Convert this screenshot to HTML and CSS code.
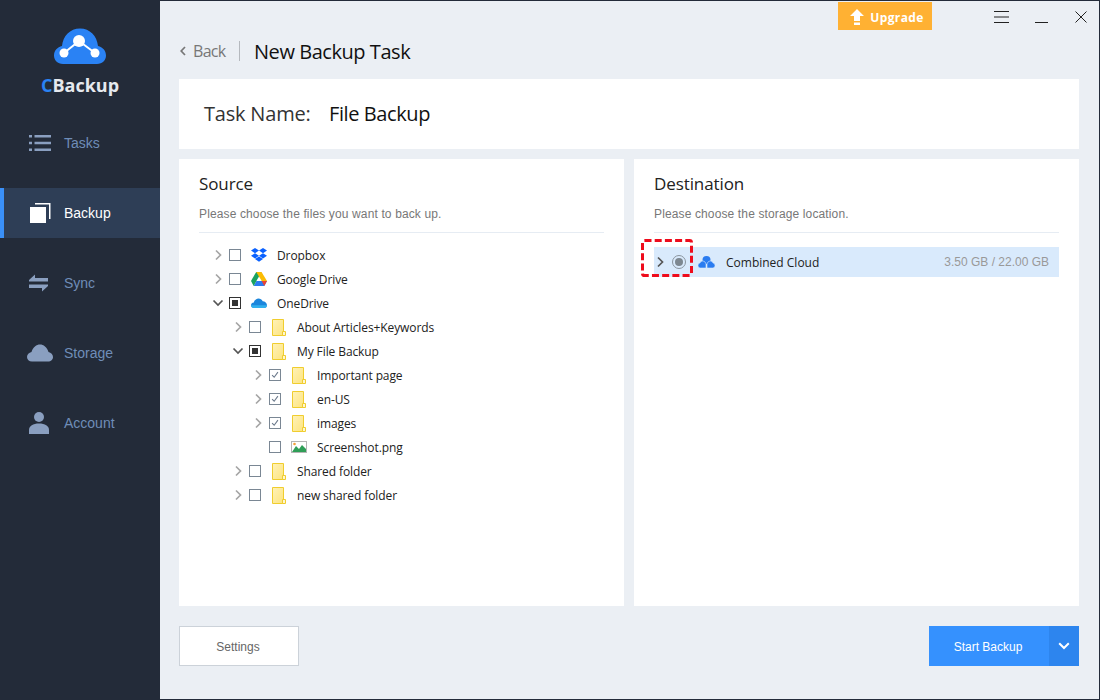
FILE: index.html
```html
<!DOCTYPE html>
<html lang="en">
<head>
<meta charset="utf-8">
<title>CBackup</title>
<link rel="stylesheet" href="styles.css">
</head>
<body>
<svg class="defs" width="0" height="0" aria-hidden="true">
  <defs>
    <linearGradient id="fgrad" x1="0" y1="0" x2="1" y2="1"><stop offset="0" stop-color="#fff2b8"/><stop offset="1" stop-color="#fde47e"/></linearGradient>
  </defs>
  <symbol id="chev-r" viewBox="0 0 10 12"><path d="M3 1.5 7.5 6 3 10.500" fill="none" stroke="currentColor" stroke-width="1.7"/></symbol>
  <symbol id="chev-d" viewBox="0 0 12 10"><path d="M1.500 2.500 6 7l4.500-4.500" fill="none" stroke="currentColor" stroke-width="1.700"/></symbol>
  <symbol id="folder" viewBox="0 0 14 17">
    <path d="M.5.5h11v16H.5z" fill="url(#fgrad)" stroke="#f0cd2e"/>
    <path d="M10.500 16.500v-4h3v4z" fill="#fff6cf" stroke="#f0cd2e"/>
  </symbol>
  <symbol id="tick" viewBox="0 0 12 12"><path d="M2.500 6.200 5 8.700 9.500 2.500" fill="none" stroke="#6c7a8c" stroke-width="1.300"/></symbol>
</svg>
<div class="app">
  <aside class="sidebar">
    <div class="logo">
      <svg class="logo-mark" width="54" height="37" viewBox="0 0 54 37">
        <path d="M10 36C4.500 36 1 32 1 27.500 1 22.500 4.500 19 9 18 10 8 17 .5 27 .5S44 8 45 18c4.500 1 8 4.500 8 9.500C53 32 49.500 36 44 36z" fill="#2a82f4"/>
        <path d="M11 25 26 13 42 25" fill="none" stroke="#fff" stroke-width="2"/>
        <circle cx="26" cy="13" r="6" fill="#fff"/><circle cx="11" cy="25" r="4.500" fill="#fff"/><circle cx="42" cy="25" r="4.500" fill="#fff"/>
      </svg>
      <div class="logo-text"><span class="logo-c">C</span>Backup</div>
    </div>
    <nav class="nav">
      <a class="nav-item">
        <svg class="nav-icon" width="22" height="18" viewBox="0 0 22 18"><path d="M0 1h3v2.500H0zM0 7.800h3v2.500H0zM0 14.500h3V17H0zM5.500 1H22v2.500H5.500zM5.500 7.800H22v2.500H5.500zM5.500 14.500H22V17H5.500z" fill="#8a9fc0"/></svg>
        <span>Tasks</span>
      </a>
      <a class="nav-item active">
        <svg class="nav-icon" width="22" height="20" viewBox="0 0 22 20"><path d="M5 0h15.500v16H19V1.500H5z" fill="#fff"/><rect x="0" y="4" width="16" height="16" fill="#fff"/></svg>
        <span>Backup</span>
      </a>
      <a class="nav-item">
        <svg class="nav-icon" width="19" height="18" viewBox="0 0 19 18"><path d="M0 7.500V6L6 .5V4h13v3.500zM19 10.500V12l-6 5.500V14H0v-3.500z" fill="#8a9fc0"/></svg>
        <span>Sync</span>
      </a>
      <a class="nav-item">
        <svg class="nav-icon" width="26" height="18" viewBox="0 0 26 18"><path d="M5 17.500C2 17.500 0 15.500 0 13c0-2.500 2-4.500 4.500-5C6 3 9.500.5 13 .5s7 2.500 8.500 7.500c2.500.5 4.500 2.500 4.500 5 0 2.500-2 4.500-5 4.500z" fill="#8a9fc0"/></svg>
        <span>Storage</span>
      </a>
      <a class="nav-item">
        <svg class="nav-icon" width="20" height="22" viewBox="0 0 20 22"><circle cx="10" cy="5" r="5" fill="#8a9fc0"/><path d="M0 22v-4c0-4 4-6.500 10-6.500S20 14 20 18v4z" fill="#8a9fc0"/></svg>
        <span>Account</span>
      </a>
    </nav>
  </aside>

  <main class="main">
    <div class="titlebar">
      <a class="upgrade">
        <svg width="14" height="16" viewBox="0 0 14 16"><path d="M7 0l7 7H10v5H4V7H0zM4 13.500h6V16H4z" fill="#fff"/></svg>
        <span>Upgrade</span>
      </a>
      <div class="win-controls">
        <svg width="15" height="12" viewBox="0 0 15 12"><path d="M0 .5h15M0 6h15M0 11.500h15" stroke="#222" fill="none"/></svg>
        <svg width="13" height="12" viewBox="0 0 13 12"><path d="M0 11.500h13" stroke="#222" fill="none"/></svg>
        <svg width="12" height="12" viewBox="0 0 12 12"><path d="M.5.500l11 11M11.500.500l-11 11" stroke="#222" fill="none"/></svg>
      </div>
    </div>

    <header class="page-head">
      <a class="back"><svg width="8" height="12" viewBox="0 0 8 12"><path d="M6 2 2.200 6 6 10" fill="none" stroke="#777" stroke-width="1.700"/></svg>Back</a>
      <span class="head-sep"></span>
      <h1>New Backup Task</h1>
    </header>

    <section class="task-card">
      <span class="task-label">Task Name:</span>
      <span class="task-value">File Backup</span>
    </section>

    <div class="panels">
      <section class="panel">
        <h2>Source</h2>
        <p class="hint">Please choose the files you want to back up.</p>
        <ul class="tree">
          <li class="row">
            <svg class="chev"><use href="#chev-r"/></svg><i class="cb"></i>
            <svg class="ficon" viewBox="0 0 16 14"><path d="M4 0 8 2.600 4 5.200 0 2.600zM12 0l4 2.600-4 2.600-4-2.600zM4 5.200l4 2.600-4 2.600-4-2.600zM12 5.200l4 2.600-4 2.600-4-2.600zM4 11l4-2.500 4 2.500-4 2.800z" fill="#0a61ff"/></svg>
            <span>Dropbox</span>
          </li>
          <li class="row">
            <svg class="chev"><use href="#chev-r"/></svg><i class="cb"></i>
            <svg class="ficon" viewBox="0 0 16 14"><path d="M5.200 0h5.300L5.400 9H0z" fill="#1aa260"/><path d="M5.200 0h5.300L16 9h-5.300z" fill="#fbbc04"/><path d="M2.700 14 5.400 9H16l-2.700 5z" fill="#2d7bf0"/><path d="M0 9h5.400L2.700 14z" fill="#1aa260"/><path d="M13.300 14 10.700 9H16z" fill="#ea4335"/></svg>
            <span>Google Drive</span>
          </li>
          <li class="row">
            <svg class="chev open"><use href="#chev-d"/></svg><i class="cb partial"></i>
            <svg class="ficon" viewBox="0 0 16 11"><path d="M3 10.500C1.300 10.500 0 9.300 0 7.800 0 6.300 1.200 5 2.800 5 3.500 2.500 5.500 1 7.500 1c1.800 0 3.300 1 4.200 2.800C14 3.800 16 5.500 16 7.800c0 1.500-1.200 2.700-2.800 2.700z" fill="#1c86dc"/><path d="M3 10.500C1.300 10.500 0 9.300 0 7.800h16c0 1.500-1.200 2.700-2.800 2.700z" fill="#32b0ee"/></svg>
            <span>OneDrive</span>
          </li>
          <li class="row lvl1">
            <svg class="chev"><use href="#chev-r"/></svg><i class="cb"></i>
            <svg class="folder"><use href="#folder"/></svg>
            <span>About Articles+Keywords</span>
          </li>
          <li class="row lvl1">
            <svg class="chev open"><use href="#chev-d"/></svg><i class="cb partial"></i>
            <svg class="folder"><use href="#folder"/></svg>
            <span>My File Backup</span>
          </li>
          <li class="row lvl2">
            <svg class="chev"><use href="#chev-r"/></svg><i class="cb"><svg class="tick"><use href="#tick"/></svg></i>
            <svg class="folder"><use href="#folder"/></svg>
            <span>Important page</span>
          </li>
          <li class="row lvl2">
            <svg class="chev"><use href="#chev-r"/></svg><i class="cb"><svg class="tick"><use href="#tick"/></svg></i>
            <svg class="folder"><use href="#folder"/></svg>
            <span>en-US</span>
          </li>
          <li class="row lvl2">
            <svg class="chev"><use href="#chev-r"/></svg><i class="cb"><svg class="tick"><use href="#tick"/></svg></i>
            <svg class="folder"><use href="#folder"/></svg>
            <span>images</span>
          </li>
          <li class="row lvl2">
            <span class="chev"></span><i class="cb"></i>
            <svg class="ficon" viewBox="0 0 16 12"><rect x=".5" y=".5" width="15" height="11" fill="#fff" stroke="#b5b5b5"/><path d="M1 11 5 5l3 3 3-4 4 4v3z" fill="#2f9e57"/><circle cx="3.500" cy="3" r="1.300" fill="#f2a13a"/></svg>
            <span>Screenshot.png</span>
          </li>
          <li class="row lvl1">
            <svg class="chev"><use href="#chev-r"/></svg><i class="cb"></i>
            <svg class="folder"><use href="#folder"/></svg>
            <span>Shared folder</span>
          </li>
          <li class="row lvl1">
            <svg class="chev"><use href="#chev-r"/></svg><i class="cb"></i>
            <svg class="folder"><use href="#folder"/></svg>
            <span>new shared folder</span>
          </li>
        </ul>
      </section>

      <section class="panel">
        <h2>Destination</h2>
        <p class="hint">Please choose the storage location.</p>
        <div class="dest-row">
          <svg class="dest-chev"><use href="#chev-r"/></svg>
          <i class="radio"></i>
          <svg class="dest-icon" width="17" height="12" viewBox="0 0 17 12"><circle cx="8.500" cy="4" r="4" fill="#2a7cf0"/><path d="M2.500 12C1 12 0 10.900 0 9.500 0 8.200.9 7.200 2 7c.4-1.300 1.300-2 2.500-2C6.500 5 8 6.500 8 8.500V12zM9 12V8.500C9 6.500 10.500 5 12.500 5c1.200 0 2.100.7 2.500 2 1.100.2 2 1.200 2 2.500 0 1.400-1 2.500-2.500 2.500z" fill="#2a7cf0" stroke="#d9eafc" stroke-width=".6"/></svg>
          <span class="dest-name">Combined Cloud</span>
          <span class="dest-size">3.50 GB / 22.00 GB</span>
          <svg class="dash-mark" width="52" height="38" viewBox="0 0 52 38"><rect x="1.500" y="1.500" width="49" height="35" rx="2" fill="none" stroke="#ee0c1c" stroke-width="3" stroke-dasharray="7 3.200"/></svg>
        </div>
      </section>
    </div>

    <footer class="footer">
      <a class="btn-settings">Settings</a>
      <div class="btn-start">
        <span class="start-label">Start Backup</span>
        <span class="start-caret"><svg width="12" height="8" viewBox="0 0 12 8"><path d="M1.200 1.300 6 6l4.800-4.700" fill="none" stroke="#fff" stroke-width="2"/></svg></span>
      </div>
    </footer>
  </main>
</div>
</body>
</html>
```

FILE: styles.css
```css
* { box-sizing: border-box; }
html, body { margin: 0; padding: 0; }
body { width: 1100px; height: 700px; overflow: hidden; font-family: "Liberation Sans", Arial, sans-serif; }
.defs { position: absolute; }
.app { display: flex; width: 1100px; height: 700px; }

.sidebar { width: 160px; flex: none; background: #232b39; display: flex; flex-direction: column; }
.logo { height: 118px; padding-top: 28px; display: flex; flex-direction: column; align-items: center; }
.logo-mark { display: block; }
.logo-text { margin-top: 8px; font-family: "Open Sans", sans-serif; font-weight: 700; font-size: 18px; line-height: 24px; color: #e6e9ee; }
.logo-c { color: #2a82f4; }
.nav { display: flex; flex-direction: column; gap: 20px; margin-top: -10px; padding-top: 10px; }
.nav-item { height: 50px; display: flex; align-items: center; position: relative; color: #6f8db8; font-size: 14px; }
.nav-item span { position: absolute; left: 64px; }
.nav-icon { margin-left: 29px; }
.nav-item:nth-child(4) .nav-icon { margin-left: 27px; }
.nav-item.active { background: #2e3e56; color: #fff; border-left: 4px solid #3a90f8; }
.nav-item.active .nav-icon { margin-left: 26px; }
.nav-item.active span { left: 60px; }

.main { flex: 1; min-width: 0; background: #ebeff4; border: 1px solid #232b39; border-left: 0; padding: 0 20px 0 19px; display: flex; flex-direction: column; }

.titlebar { height: 29px; display: flex; justify-content: flex-end; align-items: flex-start; margin-right: -20px; padding-top: 1px; }
.upgrade { width: 94px; height: 28px; background: #ffb133; color: #fff; display: flex; align-items: center; justify-content: center; gap: 6px; padding: 2px 0 0 4px; font-family: "Open Sans", sans-serif; font-size: 12px; font-weight: 700; letter-spacing: .4px; }
.win-controls { width: 167px; height: 28px; display: flex; align-items: flex-start; padding: 9px 0 0 62px; gap: 26px; }
.win-controls svg:nth-child(3) { margin-left: 1px; }

.page-head { height: 49px; display: flex; align-items: center; padding-bottom: 7px; }
.back { display: flex; align-items: center; gap: 6px; color: #777; font-family: "Open Sans", sans-serif; font-size: 16px; letter-spacing: -.7px; width: 60px; }
.head-sep { width: 1px; height: 20px; background: #b5b9be; }
h1 { margin: 0 0 0 14px; font-family: "Open Sans", sans-serif; font-weight: 400; font-size: 20px; color: #111; letter-spacing: -.45px; }

.task-card { height: 70px; background: #fff; display: flex; align-items: center; padding-left: 25px; padding-bottom: 1px; font-family: "Open Sans", sans-serif; font-size: 20px; letter-spacing: -.2px; }
.task-label { color: #333; width: 125px; }
.task-value { color: #111; letter-spacing: -.4px; }

.panels { height: 447px; margin-top: 10px; display: flex; gap: 10px; }
.panel { flex: 1; background: #fff; padding: 13px 20px 0; }
h2 { margin: 0; font-family: "Open Sans", sans-serif; font-weight: 400; font-size: 17px; line-height: 24px; color: #222; letter-spacing: -.1px; }
.hint { margin: 0; height: 37px; padding: 11px 0 0; border-bottom: 1px solid #e6ecf3; font-size: 12px; line-height: 15px; color: #777; letter-spacing: .13px; }

.tree { list-style: none; margin: 10px 0 0; padding: 0 0 0 14px; }
.row { height: 24px; display: flex; align-items: center; font-family: "Open Sans", sans-serif; font-size: 12px; letter-spacing: -.1px; color: #222; }
.row > span:last-child { position: absolute; margin-left: 64px; }
.lvl1 { padding-left: 20px; }
.lvl2 { padding-left: 40px; }
.chev { width: 10px; height: 12px; flex: none; color: #a5a5a5; }
.chev.open { width: 12px; height: 10px; margin: 0 -1px; color: #555; }
.cb { width: 12px; height: 12px; margin-left: 6px; flex: none; border: 1px solid #7a8794; background: #fff; display: flex; align-items: center; justify-content: center; }
.cb.partial { border-color: #333; }
.cb.partial::after { content: ""; width: 6px; height: 6px; background: #333; }
.tick { width: 10px; height: 10px; }
.ficon { width: 16px; height: 14px; margin-left: 10px; flex: none; }
.folder { width: 14px; height: 17px; margin-left: 11px; flex: none; }

.dest-row { position: relative; height: 30px; margin-top: 14px; background: #d9eafc; display: flex; align-items: center; font-size: 12px; color: #222; }
.dest-chev { width: 10px; height: 12px; margin-left: 1px; color: #555; flex: none; }
.radio { width: 14px; height: 14px; margin-left: 7px; border: 1px solid #8a949e; border-radius: 50%; flex: none; position: relative; }
.radio::after { content: ""; position: absolute; left: 2px; top: 2px; width: 8px; height: 8px; border-radius: 50%; background: #7d8790; }
.dest-icon { margin-left: 12px; flex: none; }
.dest-name { margin-left: 11px; font-family: "Open Sans", sans-serif; }
.dest-size { margin-left: auto; padding-right: 10px; color: #999; }
.dash-mark { position: absolute; left: -13px; top: -8px; }

.footer { margin-top: 20px; height: 40px; display: flex; justify-content: space-between; }
.btn-settings { width: 120px; height: 40px; background: #fff; border: 1px solid #ccd2d9; color: #666; font-size: 12px; display: flex; align-items: center; justify-content: center; padding: 1px 2px 0 0; }
.btn-start { width: 150px; height: 40px; display: flex; color: #fff; font-size: 12px; }
.start-label { width: 120px; background: #3591fe; display: flex; align-items: center; justify-content: center; padding: 1px 2px 0 0; }
.start-caret { width: 30px; background: #2d85ee; display: flex; align-items: center; justify-content: center; }
```
